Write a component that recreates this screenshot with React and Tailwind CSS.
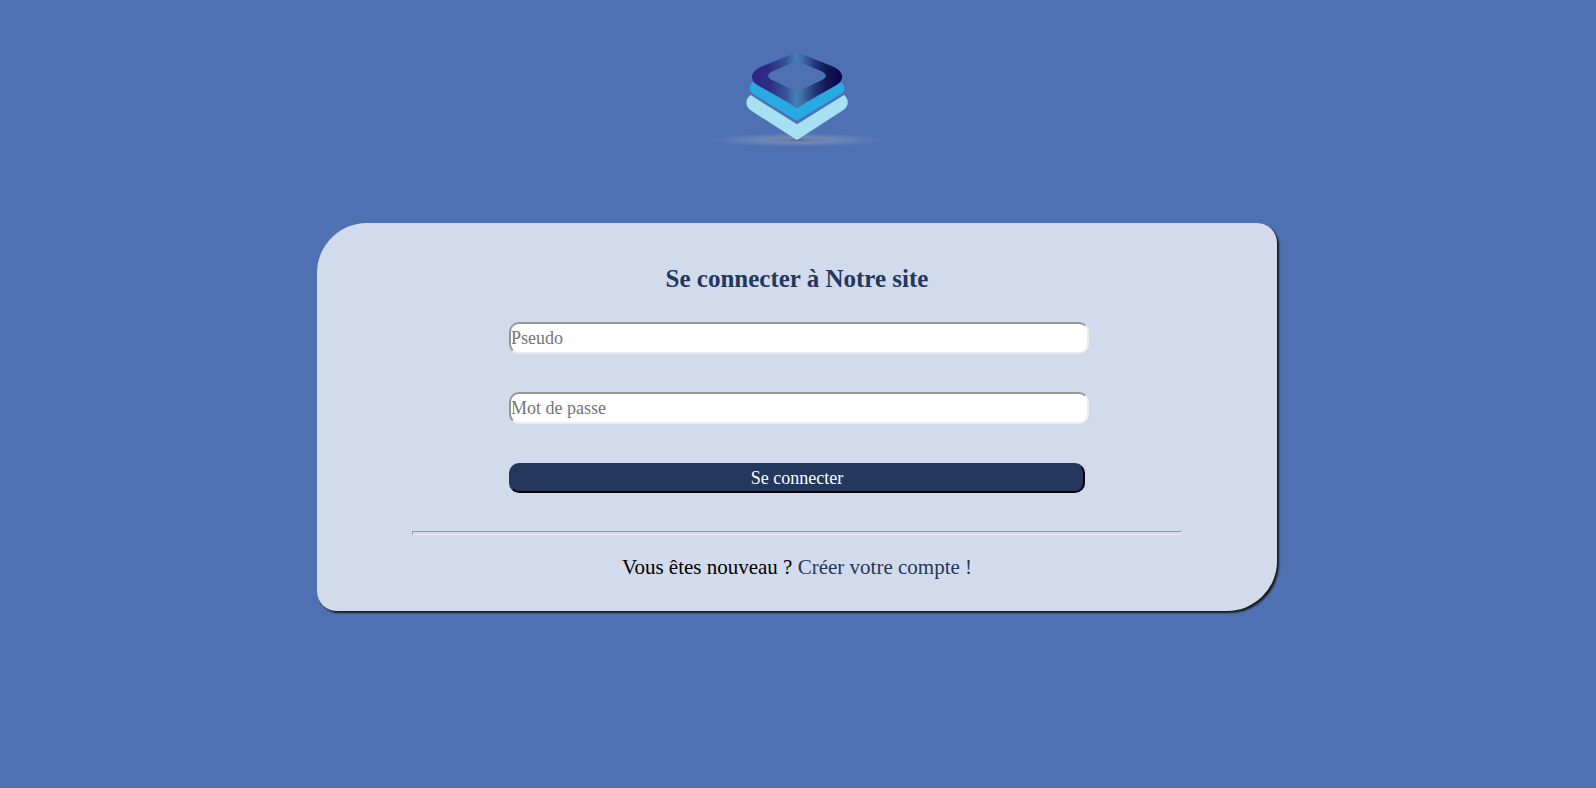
function Logo() {
  return (
    <svg viewBox="-9 0 600 360" className="h-30 w-50" role="img" aria-label="Logo">
      <defs>
        <linearGradient id="ring" gradientUnits="userSpaceOnUse" x1="156" y1="0" x2="426" y2="0">
          <stop offset="0" stopColor="#2c2380" />
          <stop offset="0.2" stopColor="#2d2f84" />
          <stop offset="0.38" stopColor="#38539a" />
          <stop offset="0.49" stopColor="#4482b6" />
          <stop offset="0.56" stopColor="#3d6ca4" />
          <stop offset="0.7" stopColor="#22377a" />
          <stop offset="0.83" stopColor="#111750" />
          <stop offset="1" stopColor="#0b0350" />
        </linearGradient>
        <radialGradient id="shadow">
          <stop offset="0" stopColor="#566470" stopOpacity="1" />
          <stop offset="0.12" stopColor="#6b7f9f" stopOpacity="0.95" />
          <stop offset="0.4" stopColor="#8093b8" stopOpacity="0.65" />
          <stop offset="0.7" stopColor="#7c92bd" stopOpacity="0.3" />
          <stop offset="1" stopColor="#6f8bbf" stopOpacity="0" />
        </radialGradient>
      </defs>
      <ellipse cx="294" cy="300" rx="275" ry="22" fill="url(#shadow)" />
      <path
        d="M152 165 L291 253 L432 165 C443 172 447 190 439 201 Q436 206 429 211 L296 297 Q291 301 286 297 L152 211 C136 200 134 178 152 165Z"
        fill="#a6e0f3"
      />
      <path
        d="M158 127 L291 205 L425 127 C434 135 436 148 429 157 Q426 160 421 163 L291 242 L161 163 C147 155 145 138 158 127Z"
        fill="#27abe2"
      />
      <path
        fillRule="evenodd"
        d="M276 43 Q291 33 306 43 L393 77 C434 93 436 120 408 136 L291 201 L174 136 C147 120 149 93 190 77Z M279 68 L218 94 C200 102 200 113 218 121 L279 150 Q291 156 303 150 L364 121 C382 113 382 102 364 94 L303 68 Q291 62 279 68Z"
        fill="url(#ring)"
      />
    </svg>
  );
}

const fieldClass =
  "h-8 w-[calc(100%+4px)] rounded-[10px] border-2 border-t-[#979797] border-l-[#979797] border-r-[#ededed] border-b-[#ededed] bg-white text-[18px] text-black placeholder:text-[#757575]";

export default function App() {
  return (
    <div className="flex min-h-screen flex-col items-center bg-[#4e71b3] pt-10 pr-0.5 font-['Liberation_Serif',serif]">
      <header>
        <Logo />
      </header>
      <main className="mt-[63px] flex w-[960px] max-w-full flex-col items-center rounded-tl-[50px] rounded-tr-[20px] rounded-br-[50px] rounded-bl-[20px] bg-[#d2dbeb] pt-[41px] pb-8 shadow-[2px_2px_2px_#1b1b1b]">
        <h1 className="text-[25px] leading-[30px] font-bold text-[#24375d]">Se connecter à Notre site</h1>
        <form className="mt-7 flex w-3/5 flex-col" onSubmit={(e) => e.preventDefault()}>
          <div className="flex flex-col gap-[38px]">
            <input type="text" name="pseudo" aria-label="Pseudo" placeholder="Pseudo" className={fieldClass} />
            <input
              type="password"
              name="password"
              aria-label="Mot de passe"
              placeholder="Mot de passe"
              className={fieldClass}
            />
          </div>
          <button
            type="submit"
            className="mt-[39px] h-[30px] rounded-[10px] border-2 border-t-[#24375d] border-r-black border-b-black border-l-[#24375d] bg-[#24375d] text-[18px] leading-6 text-white"
          >
            Se connecter
          </button>
        </form>
        <hr className="mt-[38px] h-1 w-[calc(80%+2px)] border border-t-[#9298a3] border-r-[#e8ebf1] border-b-[#e8ebf1] border-l-[#9298a3]" />
        <p className="mt-5 text-[21px] leading-6 text-black">
          Vous êtes nouveau ?{" "}
          <a href="#" className="text-[#24375d]">
            Créer votre compte !
          </a>
        </p>
      </main>
    </div>
  );
}
